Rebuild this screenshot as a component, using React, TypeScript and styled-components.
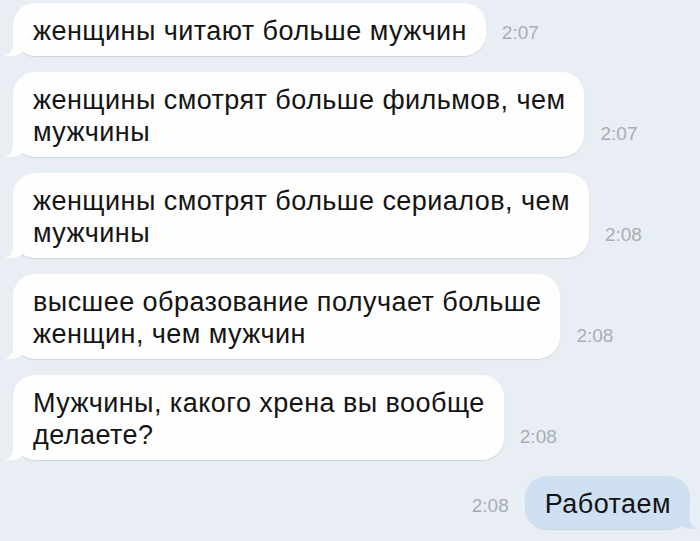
import React from "react";
import styled, { createGlobalStyle } from "styled-components";

const GlobalStyle = createGlobalStyle`
    html, body {
        margin: 0;
        padding: 0;
        background: #e9eef5;
    }
`;

const Page = styled.div`
    width: 700px;
    height: 541px;
    box-sizing: border-box;
    padding: 3px 10px 0 13px;
    display: flex;
    flex-direction: column;
    gap: 16px;
    font-family: "Liberation Sans", Arial, sans-serif;
    overflow: hidden;
`;

const Row = styled.div<{ $out?: boolean }>`
    display: flex;
    flex-direction: ${(p) => (p.$out ? "row-reverse" : "row")};
    align-items: flex-end;
    gap: 16px;
`;

const Bubble = styled.div<{ $out?: boolean }>`
    position: relative;
    background: ${(p) => (p.$out ? "#cfe0f2" : "#fefefe")};
    color: #141414;
    font-size: 27px;
    letter-spacing: 0.45px;
    line-height: 32px;
    padding: 12px 19px 9px 20px;
    border-radius: 22px;
    box-shadow: 0 1px 1px rgba(120, 135, 155, 0.25);

    &::before {
        content: "";
        position: absolute;
        bottom: 0;
        ${(p) => (p.$out ? "right: -8px;" : "left: -8px;")}
        width: 22px;
        height: 22px;
        background: ${(p) => (p.$out ? "#cfe0f2" : "#fefefe")};
        ${(p) =>
            p.$out
                ? "border-bottom-left-radius: 16px 14px;"
                : "border-bottom-right-radius: 16px 14px;"}
    }

    &::after {
        content: "";
        position: absolute;
        bottom: 0;
        ${(p) => (p.$out ? "right: -10px;" : "left: -10px;")}
        width: 10px;
        height: 22px;
        background: #e9eef5;
        ${(p) =>
            p.$out
                ? "border-bottom-left-radius: 10px;"
                : "border-bottom-right-radius: 10px;"}
    }
`;

const Time = styled.span`
    font-size: 19px;
    color: #a8adb3;
    margin-bottom: 12px;
    white-space: nowrap;
`;

type Message = { lines: string[]; time: string; out?: boolean };

const messages: Message[] = [
    { lines: ["женщины читают больше мужчин"], time: "2:07" },
    { lines: ["женщины смотрят больше фильмов, чем", "мужчины"], time: "2:07" },
    { lines: ["женщины смотрят больше сериалов, чем", "мужчины"], time: "2:08" },
    { lines: ["высшее образование получает больше", "женщин, чем мужчин"], time: "2:08" },
    { lines: ["Мужчины, какого хрена вы вообще", "делаете?"], time: "2:08" },
    { lines: ["Работаем"], time: "2:08", out: true },
];

export default function App() {
    return (
        <>
            <GlobalStyle />
            <Page>
                {messages.map((m, i) => (
                    <Row key={i} $out={m.out}>
                        <Bubble $out={m.out}>
                            {m.lines.map((line, j) => (
                                <React.Fragment key={j}>
                                    {j > 0 && <br />}
                                    {line}
                                </React.Fragment>
                            ))}
                        </Bubble>
                        <Time>{m.time}</Time>
                    </Row>
                ))}
            </Page>
        </>
    );
}
